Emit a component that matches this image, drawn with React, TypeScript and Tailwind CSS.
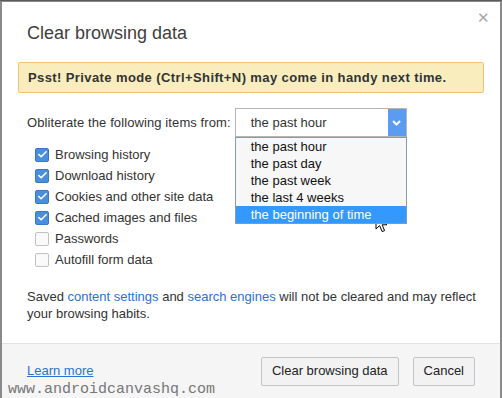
import { Check } from "lucide-react";

const ITEMS = [
  { label: "Browsing history", checked: true },
  { label: "Download history", checked: true },
  { label: "Cookies and other site data", checked: true },
  { label: "Cached images and files", checked: true },
  { label: "Passwords", checked: false },
  { label: "Autofill form data", checked: false },
];

const RANGES = ["the past hour", "the past day", "the past week", "the last 4 weeks", "the beginning of time"];

function Box({ checked }: { checked: boolean }) {
  if (checked) {
    return (
      <span className="w-[14px] h-[14px] rounded-[2px] bg-[#4a8fdc] border border-[#3b78c2] flex items-center justify-center">
        <Check className="w-[11px] h-[11px] text-white" strokeWidth={3.5} />
      </span>
    );
  }
  return <span className="w-[14px] h-[14px] rounded-[2px] bg-[#fafafa] border border-[#c2c2c2]" />;
}

export default function App() {
  return (
    <div className="w-[502px] h-[398px] overflow-hidden bg-[#5a5a5a] pt-px relative" style={{ fontFamily: '"Liberation Sans", Arial, sans-serif' }}>
      <div className="h-[397px] bg-white border-l-2 border-r-2 border-t border-[#8a8a8a] flex flex-col relative text-[#333] text-[13px]">
        <button className="absolute right-[10px] top-[8px] text-[#a8a8a8] text-[15px] leading-none">✕</button>

        <div className="px-[25px] pt-[19px]">
          <h1 className="text-[18px] leading-[24px] text-[#404040]">Clear browsing data</h1>
        </div>

        <div className="mx-[16px] mt-[17px] h-[31px] bg-[#f9edbe] border border-[#f0c36d] rounded-[2px] flex items-center px-[9px]">
          <span className="font-bold text-[13px] text-[#333] tracking-[0.4px]">Psst! Private mode (Ctrl+Shift+N) may come in handy next time.</span>
        </div>

        <div className="px-[25px] mt-[15px] flex items-center gap-[4px]">
          <span className="tracking-[0.1px]">Obliterate the following items from:</span>
          <div className="relative">
            <div className="w-[172px] h-[29px] border border-[#b5b5b5] flex items-stretch bg-white">
              <span className="flex-1 pl-[15px] flex items-center">the past hour</span>
              <span className="w-[18px] bg-[#5a9cf0] flex items-center justify-center">
                <svg width="9" height="6" viewBox="0 0 9 6"><path d="M1 1l3.5 3.5L8 1" stroke="white" strokeWidth="2" fill="none" /></svg>
              </span>
            </div>
            <div className="absolute left-0 top-[29px] w-[172px] border border-[#7f9db9] bg-[#f7f7f7] z-10">
              {RANGES.map((r, i) => (
                <div key={r} className={`h-[17px] leading-[17px] pl-[15px] ${i === 4 ? "bg-[#3399ff] text-white" : "text-[#111]"}`}>{r}</div>
              ))}
            </div>
          </div>
        </div>

        <div className="pl-[33px] mt-[7px] flex flex-col">
          {ITEMS.map((it) => (
            <label key={it.label} className="h-[21px] flex items-center gap-[6px]">
              <Box checked={it.checked} />
              <span>{it.label}</span>
            </label>
          ))}
        </div>

        <p className="px-[25px] mt-[18px] leading-[17px] pr-[20px]">
          Saved <span className="text-[#2a72d4]">content settings</span> and <span className="text-[#2a72d4]">search engines</span> will not be cleared and may reflect your browsing habits.
        </p>

        <div className="mt-auto h-[55px] bg-[#f5f5f5] border-t border-[#e2e2e2] flex items-center px-[25px]">
          <a className="text-[#2a72d4] underline">Learn more</a>
          <div className="ml-auto flex gap-[14px]">
            <button className="h-[29px] px-[10px] border border-[#c4c4c4] rounded-[2px] bg-[#f2f2f2] text-[#222]">Clear browsing data</button>
            <button className="h-[29px] px-[10px] border border-[#c4c4c4] rounded-[2px] bg-[#f2f2f2] text-[#222]">Cancel</button>
          </div>
        </div>
      </div>

      <span className="absolute left-[8px] top-[379px] text-[15px] text-[#777]" style={{ fontFamily: '"Liberation Mono", "Courier New", monospace' }}>www.androidcanvashq.com</span>

      <svg className="absolute left-[375px] top-[213px]" width="14" height="20" viewBox="0 0 14 20">
        <path d="M1 1v15l3.6-3.4 2.6 6 2.4-1-2.5-5.8H12z" fill="white" stroke="black" strokeWidth="1" strokeLinejoin="round" />
      </svg>
    </div>
  );
}
